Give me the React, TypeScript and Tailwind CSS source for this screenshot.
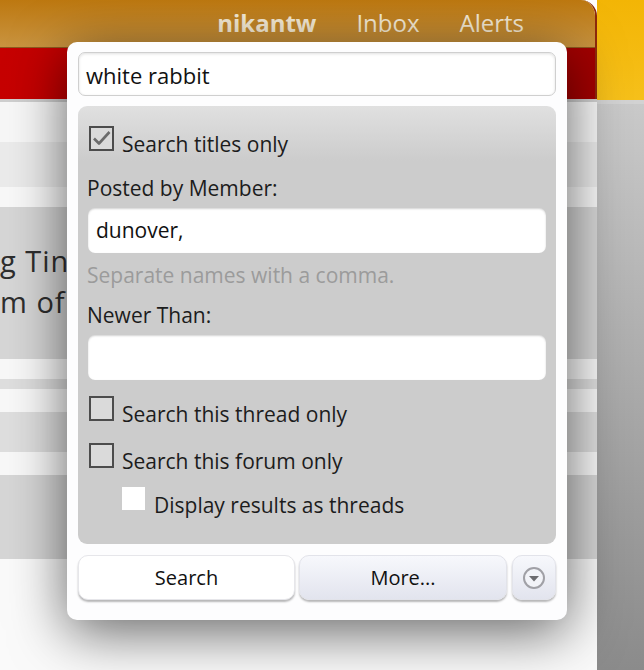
import React from "react";

type CheckProps = { checked?: boolean };

const Checkbox: React.FC<CheckProps> = ({ checked }) => (
  <span className="ml-[1px] flex h-[25px] w-[25px] shrink-0 items-center justify-center border-2 border-[#4c4c4c] bg-[#dadada]">
    {checked && (
      <svg width="21" height="21" viewBox="0 0 21 21" fill="none">
        <path
          d="M3 10.5 L8 15.5 L18.5 4"
          stroke="#6b6b6b"
          strokeWidth="2.6"
          strokeLinejoin="round"
        />
      </svg>
    )}
  </span>
);

const CheckRow: React.FC<{ label: string; checked?: boolean; className?: string }> = ({
  label,
  checked,
  className = "",
}) => (
  <div className={`flex items-start gap-2 leading-[36px] ${className}`}>
    <Checkbox checked={checked} />
    <span>{label}</span>
  </div>
);

const TextBox: React.FC<{ value?: string; className?: string }> = ({ value, className = "" }) => (
  <div
    className={`flex h-[45px] items-center rounded-[7px] bg-white pl-[8px] text-[21px] text-[#111] shadow-[inset_0_1px_2px_rgba(0,0,0,0.18)] ${className}`}
  >
    {value}
  </div>
);

const SearchMenu: React.FC = () => (
  <div className="absolute left-[67px] top-[42px] w-[500px] rounded-[10px] bg-[#fdfdfe] px-[11px] pb-[20px] pt-[10px] font-['Open_Sans',sans-serif] text-[21px] text-[#1c1c1c] shadow-[0_12px_55px_rgba(0,0,0,0.6)]">
    <div className="flex h-[44px] items-center rounded-[7px] border border-[#cfcfcf] bg-white pl-[7px] pt-[3px] text-[22px] text-[#111] shadow-[inset_0_1px_3px_rgba(0,0,0,0.12)]">
      white rabbit
    </div>

    <div className="mt-[10px] rounded-[9px] bg-[linear-gradient(to_bottom,#e0e0e0,#cccccc_55px,#cccccc)] px-[10px] pb-[21px] pt-[20px]">
      <CheckRow label="Search titles only" checked />

      <div className="mt-[12px] -ml-[1px] leading-[28px]">Posted by Member:</div>
      <TextBox value="dunover," className="mt-[6px]" />
      <div className="mt-[8px] -ml-[1px] leading-[28px] text-[#9b9b9b]">Separate names with a comma.</div>

      <div className="mt-[12px] -ml-[1px] leading-[28px]">Newer Than:</div>
      <TextBox className="mt-[6px]" />

      <CheckRow label="Search this thread only" className="mt-[16px]" />
      <CheckRow label="Search this forum only" className="mt-[11px]" />

      <div className="mt-[8px] flex items-start gap-[9px] pl-[34px] leading-[36px]">
        <span className="h-[23px] w-[23px] shrink-0 bg-white" />
        <span>Display results as threads</span>
      </div>
    </div>

    <div className="mt-[11px] flex h-[45px] gap-[4px] text-[20px] text-[#111]">
      <button className="flex w-[217px] items-center justify-center rounded-[10px] border border-[#e6e6ea] bg-white shadow-[0_2px_2px_rgba(0,0,0,0.28)]">
        Search
      </button>
      <button className="flex w-[208px] items-center justify-center rounded-[10px] border border-[#e2e3ea] bg-[linear-gradient(to_bottom,#f7f8fc,#e2e4ee)] shadow-[0_2px_2px_rgba(0,0,0,0.28)]">
        More...
      </button>
      <button className="ml-[1px] flex w-[44px] items-center justify-center rounded-[10px] border border-[#e2e3ea] bg-[linear-gradient(to_bottom,#f7f8fc,#e2e4ee)] shadow-[0_2px_2px_rgba(0,0,0,0.28)]">
        <svg width="24" height="24" viewBox="0 0 24 24">
          <circle cx="12" cy="12" r="10" fill="#f2f3f8" stroke="#a0a0a6" strokeWidth="2" />
          <path d="M7 10 H17 L12 15.5 Z" fill="#6c6c70" />
        </svg>
      </button>
    </div>
  </div>
);

export default function App() {
  return (
    <div className="relative flex h-[670px] w-[644px] overflow-hidden bg-white font-['Open_Sans',sans-serif]">
      {/* main column */}
      <div className="flex w-[597px] flex-col">
        <div className="overflow-hidden rounded-tr-[16px] border-r-2 border-[#8e2a0c]">
          <div className="flex h-[48px] items-start justify-end gap-[40px] border-b border-[#8d5a1e] bg-[linear-gradient(to_bottom,#bd7810,#c99440)] pr-[71px] pt-[7px] text-[24px] leading-[32px] text-[#f5ead4]">
            <span className="font-bold">nikantw</span>
            <span>Inbox</span>
            <span>Alerts</span>
          </div>
          <div className="h-[51px] bg-[linear-gradient(to_right,#c60000,#b30000_80%,#a20000)]" />
        </div>

        <div className="h-[3px] bg-[#cfcfcf]" />
        <div className="h-[40px] bg-[#f7f7f7]" />
        <div className="h-[45px] bg-[#ebebeb]" />
        <div className="h-[20px] bg-[#f8f8f8]" />
        <div className="h-[152px] overflow-hidden bg-[#d6d6d6] pt-[33px] text-[29px] leading-[41px] text-[#2e2e2e]">
          <div className="whitespace-nowrap tracking-[1px]">g Ting</div>
          <div className="whitespace-nowrap tracking-[1px]">m of</div>
        </div>
        <div className="h-[20px] bg-[#f8f8f8]" />
        <div className="h-[10px] bg-[#dedede]" />
        <div className="h-[23px] bg-[#f8f8f8]" />
        <div className="h-[40px] bg-[#dedede]" />
        <div className="h-[23px] bg-[#f8f8f8]" />
        <div className="h-[84px] bg-[#d6d6d6]" />
        <div className="flex-1 bg-[#fafafa]" />
      </div>

      {/* side column */}
      <div className="flex flex-1 flex-col">
        <div className="h-[100px] bg-[linear-gradient(to_bottom,#f3b505,#f6c01a)]" />
        <div className="h-[4px] bg-[#d2d2d2]" />
        <div className="flex-1 bg-[linear-gradient(to_bottom,#c9c9c9,#8b8b8b)]" />
      </div>

      <SearchMenu />
    </div>
  );
}
